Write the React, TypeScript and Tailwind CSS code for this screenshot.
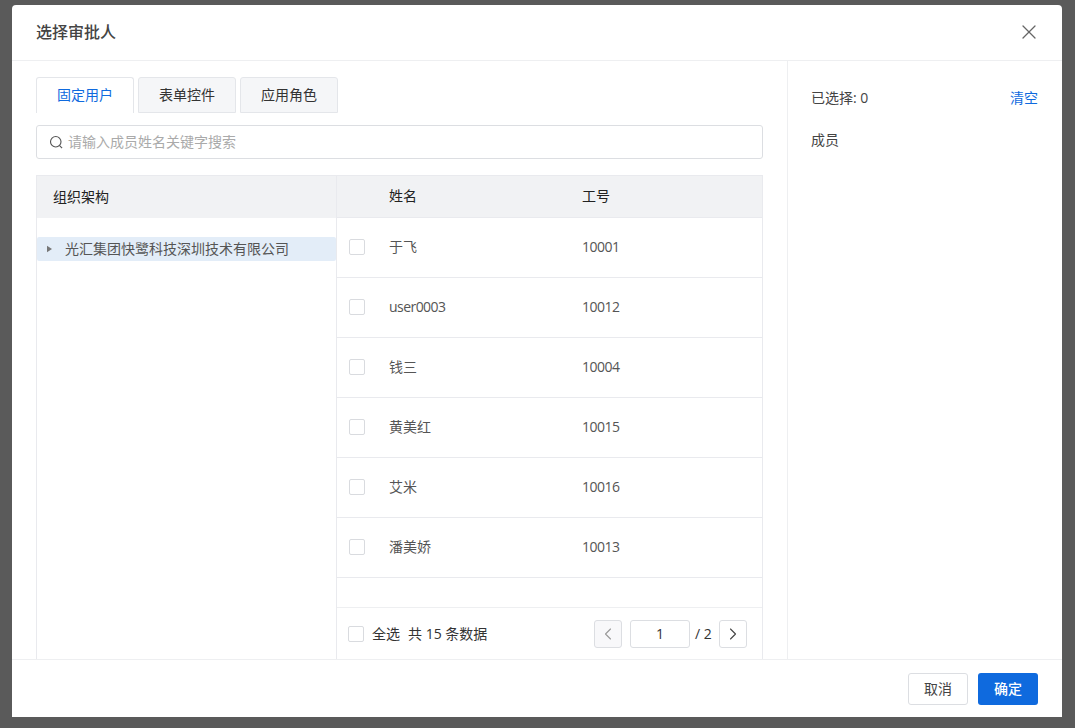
import { ChevronLeft, ChevronRight, X } from "lucide-react";

const rows = [
  ["于飞", "10001"],
  ["user0003", "10012"],
  ["钱三", "10004"],
  ["黄美红", "10015"],
  ["艾米", "10016"],
  ["潘美娇", "10013"],
];

function Box() {
  return <span className="block h-4 w-4 shrink-0 rounded-[2px] border border-[#d9dbdf] bg-white" />;
}

function Tab({ label, active }: { label: string; active?: boolean }) {
  return (
    <div
      className={
        active
          ? "flex h-9 w-[98px] items-center justify-center rounded-t-[3px] border border-b-0 border-[#e4e6ea] bg-white pb-px text-[#0f6ade]"
          : "flex h-9 w-[98px] items-center justify-center rounded-t-[3px] border border-[#e4e6ea] bg-[#f5f6f8] pb-px text-[#333]"
      }
    >
      {label}
    </div>
  );
}

export default function App() {
  return (
    <div
      className="h-[728px] w-[1075px] overflow-hidden bg-[#5a5a5a] pl-3 pt-[5px] text-sm text-[#333]"
      style={{ fontFamily: '"Open Sans", "Noto Sans CJK SC", sans-serif' }}
    >
      <div className="flex h-[712px] w-[1050px] flex-col overflow-hidden rounded-t-[4px] bg-white">
        <header className="flex h-[56px] shrink-0 items-center justify-between border-b border-[#eeeff1] pb-[2px] pl-6 pr-[21px]">
          <h1 className="text-base font-medium text-[#444]">选择审批人</h1>
          <X className="h-6 w-6 text-[#666]" strokeWidth={1.3} />
        </header>

        <div className="flex min-h-0 flex-1">
          <section className="flex w-[776px] shrink-0 flex-col border-r border-[#eeeff1] pl-6 pr-6 pt-4">
            <div className="flex gap-1">
              <Tab label="固定用户" active />
              <Tab label="表单控件" />
              <Tab label="应用角色" />
            </div>
            <div className="mt-3 flex h-[34px] w-[727px] items-center gap-1 rounded-[3px] border border-[#dcdee2] pl-3 text-[#aaa]">
              <svg viewBox="0 0 16 16" className="h-[15px] w-[15px]" fill="none" stroke="#555" strokeWidth="1.2">
                <circle cx="7.2" cy="7.2" r="5.6" />
                <path d="M11.3 11.3 14 14" />
              </svg>
              <span>请输入成员姓名关键字搜索</span>
            </div>

            <div className="mt-4 flex min-h-0 w-[727px] flex-1 border border-b-0 border-[#e9eaee]">
              <div className="w-[300px] shrink-0 border-r border-[#e9eaee]">
                <div className="flex h-[42px] items-center bg-[#f1f2f4] pl-4 text-[#222]">组织架构</div>
                <div className="mt-[19px] flex h-6 items-center rounded-[2px] bg-[#e3edf8] pl-[10px] text-[#555]">
                  <svg viewBox="0 0 6 8" className="h-2 w-[5px]" fill="#777">
                    <path d="M0 0 6 4 0 8Z" />
                  </svg>
                  <span className="ml-[13px]">光汇集团快鹭科技深圳技术有限公司</span>
                </div>
              </div>

              <div className="flex min-w-0 flex-1 flex-col">
                <div className="flex h-[42px] shrink-0 items-center border-b border-[#e9eaee] bg-[#f1f2f4] pb-[2px] text-[#222]">
                  <span className="ml-[52px] w-[193px]">姓名</span>
                  <span>工号</span>
                </div>
                {rows.map(([name, id]) => (
                  <div key={id} className="flex h-[60px] shrink-0 items-center border-b border-[#e9eaee] pb-[2px] text-[#555]">
                    <span className="ml-3">
                      <Box />
                    </span>
                    <span className={name === "user0003" ? "ml-6 w-[193px] tracking-[-0.55px]" : "ml-6 w-[193px]"}>{name}</span>
                    <span className="tracking-[-0.5px]">{id}</span>
                  </div>
                ))}
                <div className="h-[30px] shrink-0 border-b border-[#eeeff1]" />
                <div className="flex flex-1 items-center px-[11px] pr-[15px] text-[#333]">
                  <Box />
                  <span className="ml-2">全选</span>
                  <span className="ml-2">共 15 条数据</span>
                  <div className="ml-auto flex items-center">
                    <span className="flex h-7 w-7 items-center justify-center rounded-[3px] border border-[#dcdee2] bg-[#f8f8fa] text-[#999]">
                      <ChevronLeft className="h-5 w-5" strokeWidth={1.3} />
                    </span>
                    <span className="ml-2 flex h-7 w-[60px] items-center justify-center rounded-[3px] border border-[#dcdee2]">1</span>
                    <span className="ml-[5px] w-4 whitespace-nowrap">/ 2</span>
                    <span className="ml-2 flex h-7 w-7 items-center justify-center rounded-[3px] border border-[#dcdee2] text-[#444]">
                      <ChevronRight className="h-5 w-5" strokeWidth={1.3} />
                    </span>
                  </div>
                </div>
              </div>
            </div>
          </section>

          <aside className="flex-1 pl-[23px] pr-6 pt-7">
            <div className="flex h-[18px] items-center justify-between text-[#444]">
              <span>已选择: 0</span>
              <span className="text-[#0f6ade]">清空</span>
            </div>
            <div className="mt-[23px] text-[#444]">成员</div>
          </aside>
        </div>

        <footer className="flex h-[58px] shrink-0 items-center justify-end gap-[10px] border-t border-[#eeeff1] pr-6">
          <button className="h-8 w-[60px] rounded-[3px] border border-[#dcdee2] bg-white text-[#444]">取消</button>
          <button className="h-8 w-[60px] rounded-[3px] bg-[#0f6ade] font-medium text-white">确定</button>
        </footer>
      </div>
    </div>
  );
}
